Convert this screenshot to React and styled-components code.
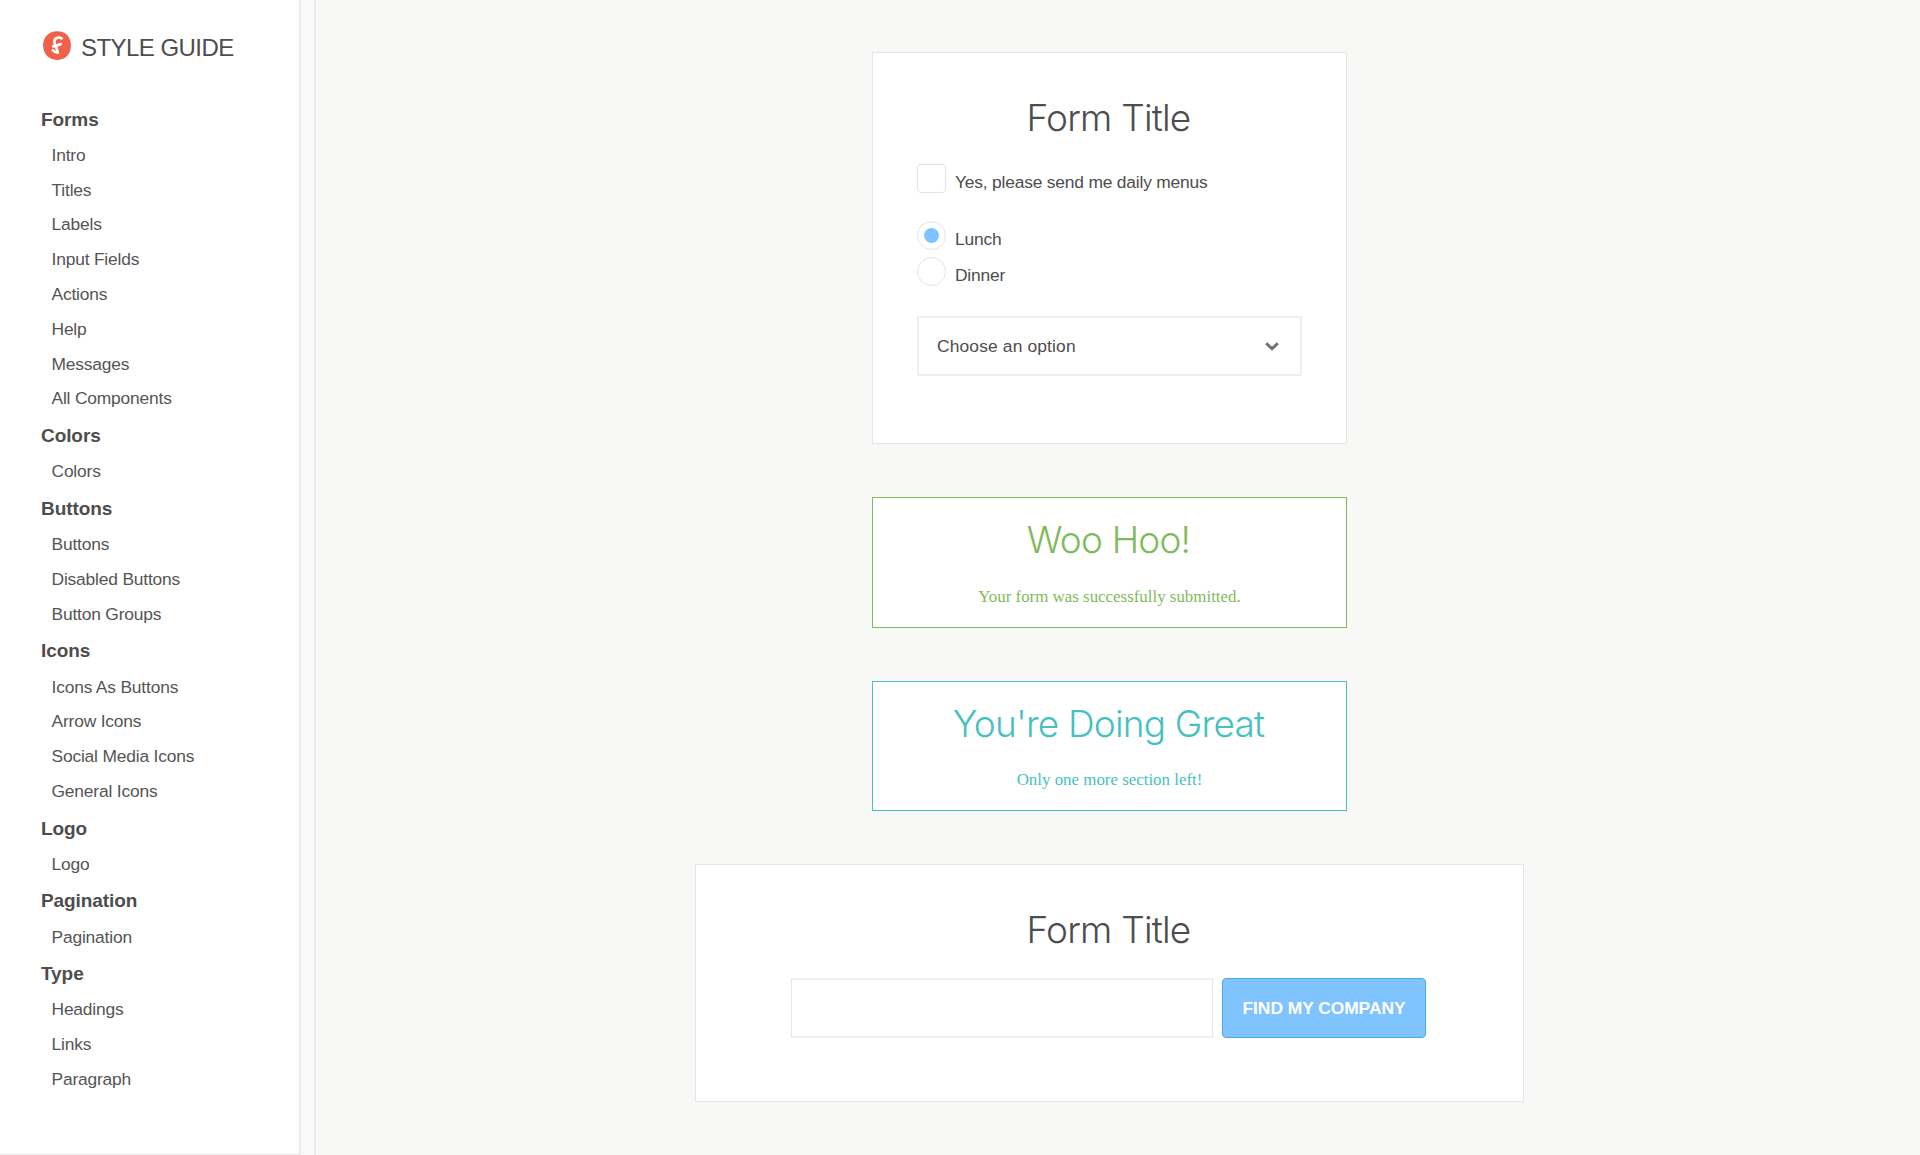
import React from "react";
import styled, { createGlobalStyle } from "styled-components";

const sans = '"Liberation Sans", Arial, sans-serif';
const light = 'Inter, "Liberation Sans", sans-serif';
const serif = '"Liberation Serif", "Times New Roman", serif';

const GlobalStyle = createGlobalStyle`
  *, *::before, *::after { box-sizing: border-box; }
  body { margin: 0; background: #f8f8f6; color: #4d4d4d; font-family: ${sans}; }
`;

const Page = styled.div`
  display: flex;
  height: 1155px;
  overflow: hidden;
`;

const Sidebar = styled.aside`
  flex: 0 0 301px;
  background: #fff;
  border-right: 2px solid #ededed;
  border-bottom: 1px solid #e9e9e9;
`;

const Gutter = styled.div`
  flex: 0 0 15px;
  background: #fafafa;
  border-right: 2px solid #ebebea;
`;

const Brand = styled.header`
  display: flex;
  align-items: flex-start;
  gap: 10px;
  height: 99.8px;
  padding: 31px 0 0 43px;
`;

const BrandName = styled.h1`
  margin: 2px 0 0;
  font-size: 24px;
  font-weight: 400;
  line-height: 30px;
  letter-spacing: -0.55px;
  white-space: nowrap;
`;

const NavHeading = styled.h2`
  margin: 0;
  padding: 1.8px 0 0 41px;
  font-size: 19px;
  line-height: 36.2px;
  letter-spacing: -0.08px;
`;

const NavList = styled.ul`
  margin: 0;
  padding: 0 0 0 51.5px;
  list-style: none;
`;

const NavItem = styled.li`
  color: #555;
  font-size: 17.4px;
  line-height: 34.82px;
  letter-spacing: -0.18px;
  white-space: nowrap;
`;

const Main = styled.main`
  flex: 1;
  display: flex;
  flex-direction: column;
  align-items: center;
  gap: 53px;
  padding: 52px 17px 0 0;
`;

const Card = styled.section`
  width: ${(p) => p.$width}px;
  height: ${(p) => p.$height}px;
  padding: ${(p) => p.$pad};
  background: #fff;
  border: 1px solid #e6e6e6;
`;

const Title = styled.h2`
  margin: 0;
  padding-right: 2px;
  font-family: ${light};
  font-size: 37px;
  font-weight: 300;
  line-height: 44px;
  letter-spacing: -0.8px;
  text-align: center;
  white-space: nowrap;
`;

const Choice = styled.div`
  display: flex;
  align-items: flex-start;
  gap: 9px;
  height: 29px;
  margin-top: ${(p) => p.$top}px;
`;

const Mark = styled.span`
  display: flex;
  align-items: center;
  justify-content: center;
  width: 29px;
  height: 29px;
  border: 1px solid #e4e4e4;
  border-radius: ${(p) => (p.$round ? "50%" : "4px")};
`;

const Dot = styled.span`
  width: 15px;
  height: 15px;
  border-radius: 50%;
  background: #7ec2ff;
`;

const ChoiceLabel = styled.span`
  padding-top: 4px;
  font-size: 17.4px;
  line-height: 29px;
  letter-spacing: -0.19px;
  white-space: nowrap;
`;

const Select = styled.div`
  display: flex;
  align-items: center;
  justify-content: space-between;
  height: 60px;
  margin-top: 30px;
  padding: 0 21px 0 18px;
  border: 2px solid #eeeeee;
  border-radius: 2px;
  font-size: 17.4px;
  letter-spacing: 0.15px;
`;

const Message = styled.section`
  width: 475px;
  height: ${(p) => p.$height}px;
  padding-top: 20px;
  background: #fff;
  border: 1px solid ${(p) => p.$color};
  color: ${(p) => p.$color};
`;

const MessageText = styled.p`
  margin: ${(p) => p.$top}px 0 0;
  font-family: ${serif};
  font-size: 16.9px;
  line-height: 24px;
  text-align: center;
`;

const SearchRow = styled.div`
  display: flex;
  gap: 9px;
  margin-top: 26px;
`;

const Field = styled.div`
  width: 422px;
  height: 60px;
  border: solid;
  border-width: 2px 1px;
  border-color: #efefef #e6e6e6;
`;

const Button = styled.button`
  width: 204px;
  height: 60px;
  padding: 0;
  border: 1px solid #49a8ec;
  border-radius: 4px;
  background: #7fc3ff;
  color: #fff;
  font: 700 17.4px/58px ${sans};
  letter-spacing: -0.04px;
  white-space: nowrap;
`;

const sections = [
  ["Forms", ["Intro", "Titles", "Labels", "Input Fields", "Actions", "Help", "Messages", "All Components"]],
  ["Colors", ["Colors"]],
  ["Buttons", ["Buttons", "Disabled Buttons", "Button Groups"]],
  ["Icons", ["Icons As Buttons", "Arrow Icons", "Social Media Icons", "General Icons"]],
  ["Logo", ["Logo"]],
  ["Pagination", ["Pagination"]],
  ["Type", ["Headings", "Links", "Paragraph"]],
];

const BrandMark = () => (
  <svg width="28" height="29" viewBox="0 0 28 29" fill="none">
    <path
      d="M14 .2C22 0 27.600 5 27.900 13.500C28.200 22.500 23 28.800 14.500 28.900C5.500 29 .2 22.500 .1 14.500C0 6 6 .4 14 .2Z"
      fill="#f0614a"
    />
    <path
      d="M18.600 7.400C15.200 5.200 11.200 7.400 11.400 10.800C11.600 14 13.900 17 14.900 21.800C12.800 21.800 11 20.600 9.800 19.200M10.200 15.400C12.500 15.200 15.200 14.300 17.800 13"
      stroke="#fff"
      strokeWidth="2.600"
      strokeLinecap="round"
      strokeLinejoin="round"
    />
  </svg>
);

const Chevron = () => (
  <svg width="14" height="9" viewBox="0 0 14 9" fill="none">
    <path d="M1.200 1.200L7 6.700L12.800 1.200" stroke="#6e6e6e" strokeWidth="2.900" />
  </svg>
);

export default function App() {
  return (
    <Page>
      <GlobalStyle />
      <Sidebar>
        <Brand>
          <BrandMark />
          <BrandName>STYLE GUIDE</BrandName>
        </Brand>
        <nav>
          {sections.map(([name, items]) => (
            <React.Fragment key={name}>
              <NavHeading>{name}</NavHeading>
              <NavList>
                {items.map((item) => (
                  <NavItem key={item}>{item}</NavItem>
                ))}
              </NavList>
            </React.Fragment>
          ))}
        </nav>
      </Sidebar>
      <Gutter />
      <Main>
        <Card $width={475} $height={392} $pad="43px 44px 0">
          <Title>Form Title</Title>
          <Choice $top={24}>
            <Mark />
            <ChoiceLabel>Yes, please send me daily menus</ChoiceLabel>
          </Choice>
          <Choice $top={28}>
            <Mark $round>
              <Dot />
            </Mark>
            <ChoiceLabel>Lunch</ChoiceLabel>
          </Choice>
          <Choice $top={7}>
            <Mark $round />
            <ChoiceLabel>Dinner</ChoiceLabel>
          </Choice>
          <Select>
            Choose an option
            <Chevron />
          </Select>
        </Card>
        <Message $color="#7fbb5b" $height={131}>
          <Title>Woo Hoo!</Title>
          <MessageText $top={23}>Your form was successfully submitted.</MessageText>
        </Message>
        <Message $color="#47c1c0" $height={130}>
          <Title>You're Doing Great</Title>
          <MessageText $top={22}>Only one more section left!</MessageText>
        </Message>
        <Card $width={829} $height={238} $pad="43px 95px 0">
          <Title>Form Title</Title>
          <SearchRow>
            <Field />
            <Button>FIND MY COMPANY</Button>
          </SearchRow>
        </Card>
      </Main>
    </Page>
  );
}
